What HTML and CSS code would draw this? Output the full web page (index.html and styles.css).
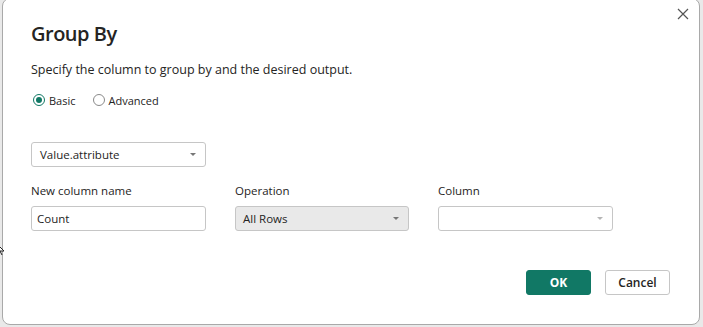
FILE: index.html
```html
<!DOCTYPE html>
<html>
<head>
<meta charset="utf-8">
<link rel="stylesheet" href="styles.css">
</head>
<body>
<div class="dialog">
  <button class="close" aria-label="Close">
    <svg width="12" height="12" viewBox="0 0 12 12"><path d="M1 1L11 11M11 1L1 11" stroke="#555" stroke-width="1.2" fill="none"/></svg>
  </button>
  <h1 class="title">Group By</h1>
  <p class="subtitle">Specify the column to group by and the desired output.</p>
  <div class="radios">
    <label class="radio"><span class="dot checked"></span>Basic</label>
    <label class="radio"><span class="dot"></span>Advanced</label>
  </div>
  <div class="select groupby"><span>Value.attribute</span><span class="arrow"></span></div>
  <div class="grid">
    <div class="label">New column name</div>
    <div class="label">Operation</div>
    <div class="label">Column</div>
    <div class="input">Count</div>
    <div class="select op"><span>All Rows</span><span class="arrow"></span></div>
    <div class="select col"><span></span><span class="arrow light"></span></div>
  </div>
  <div class="actions">
    <button class="btn primary">OK</button>
    <button class="btn">Cancel</button>
  </div>
</div>
<svg class="cursor" width="8" height="14" viewBox="0 0 8 14"><path d="M-4 1L4 9L0 9L2 13" fill="#fff" stroke="#222" stroke-width="1"/></svg>
</body>
</html>
```
FILE: styles.css
```css
* { box-sizing: border-box; }
html, body { margin: 0; padding: 0; }
body {
  width: 703px;
  height: 327px;
  overflow: hidden;
  background: #e9e9e9;
  font-family: "Segoe UI", "Open Sans", "Noto Sans", sans-serif;
  color: #252423;
  position: relative;
}
.dialog {
  position: relative;
  margin: -2px 0 0 2px;
  width: 698px;
  height: 327px;
  background: #fff;
  border: 1px solid #a9a9a9;
  border-radius: 8px;
  padding: 20px 29px 0 28px;
}
.close {
  position: absolute;
  top: 8px;
  right: 9px;
  width: 14px;
  height: 14px;
  padding: 0;
  border: 0;
  background: none;
  display: flex;
  align-items: center;
  justify-content: center;
}
.title {
  margin: 0;
  font-size: 20px;
  line-height: 30px;
  height: 30px;
  font-weight: 600;
  letter-spacing: -0.5px;
}
.subtitle {
  margin: 11px 0 0;
  font-size: 12.5px;
  line-height: 20px;
  height: 20px;
}
.radios {
  margin-top: 10px;
  height: 20px;
  display: flex;
  align-items: center;
  gap: 15px;
  font-size: 11px;
}
.radio {
  display: flex;
  align-items: center;
  gap: 4px;
}
.dot {
  width: 12px;
  height: 12px;
  border-radius: 50%;
  border: 1px solid #8a8a8a;
  position: relative;
  margin-left: 2px;
}
.dot.checked { border-color: #117865; }
.dot.checked::after {
  content: "";
  position: absolute;
  left: 2px; top: 2px;
  width: 6px; height: 6px;
  border-radius: 50%;
  background: #117865;
}
.select, .input {
  height: 25px;
  border: 1px solid #c6c6c6;
  border-radius: 3px;
  display: flex;
  align-items: center;
  justify-content: space-between;
  font-size: 11.5px;
  background: #fff;
}
.select { padding: 0 9px 0 8px; }
.groupby { margin-top: 32px; width: 175px; }
.arrow {
  width: 0; height: 0;
  border-left: 3px solid transparent;
  border-right: 3px solid transparent;
  border-top: 3px solid #777;
}
.arrow.light { border-top-color: #b5b5b5; }
.grid {
  margin-top: 14px;
  display: grid;
  grid-template-columns: 175px 174px 175px;
  column-gap: 29px;
  row-gap: 5px;
}
.label {
  font-size: 11.5px;
  line-height: 20px;
  height: 20px;
}
.input { padding: 0 5px; }
.op { background: #e9e9e9; padding-left: 7px; }
.actions {
  margin-top: 39px;
  display: flex;
  justify-content: flex-end;
  gap: 14px;
}
.btn {
  width: 65px;
  height: 25px;
  border: 1px solid #c6c6c6;
  border-radius: 3px;
  background: #fff;
  font-family: inherit;
  font-size: 12px;
  font-weight: 600;
  color: #252423;
  padding: 0;
}
.btn.primary {
  background: #117865;
  border-color: #117865;
  color: #fff;
  font-weight: 700;
}
.cursor {
  position: absolute;
  left: 0;
  top: 242px;
}
```
